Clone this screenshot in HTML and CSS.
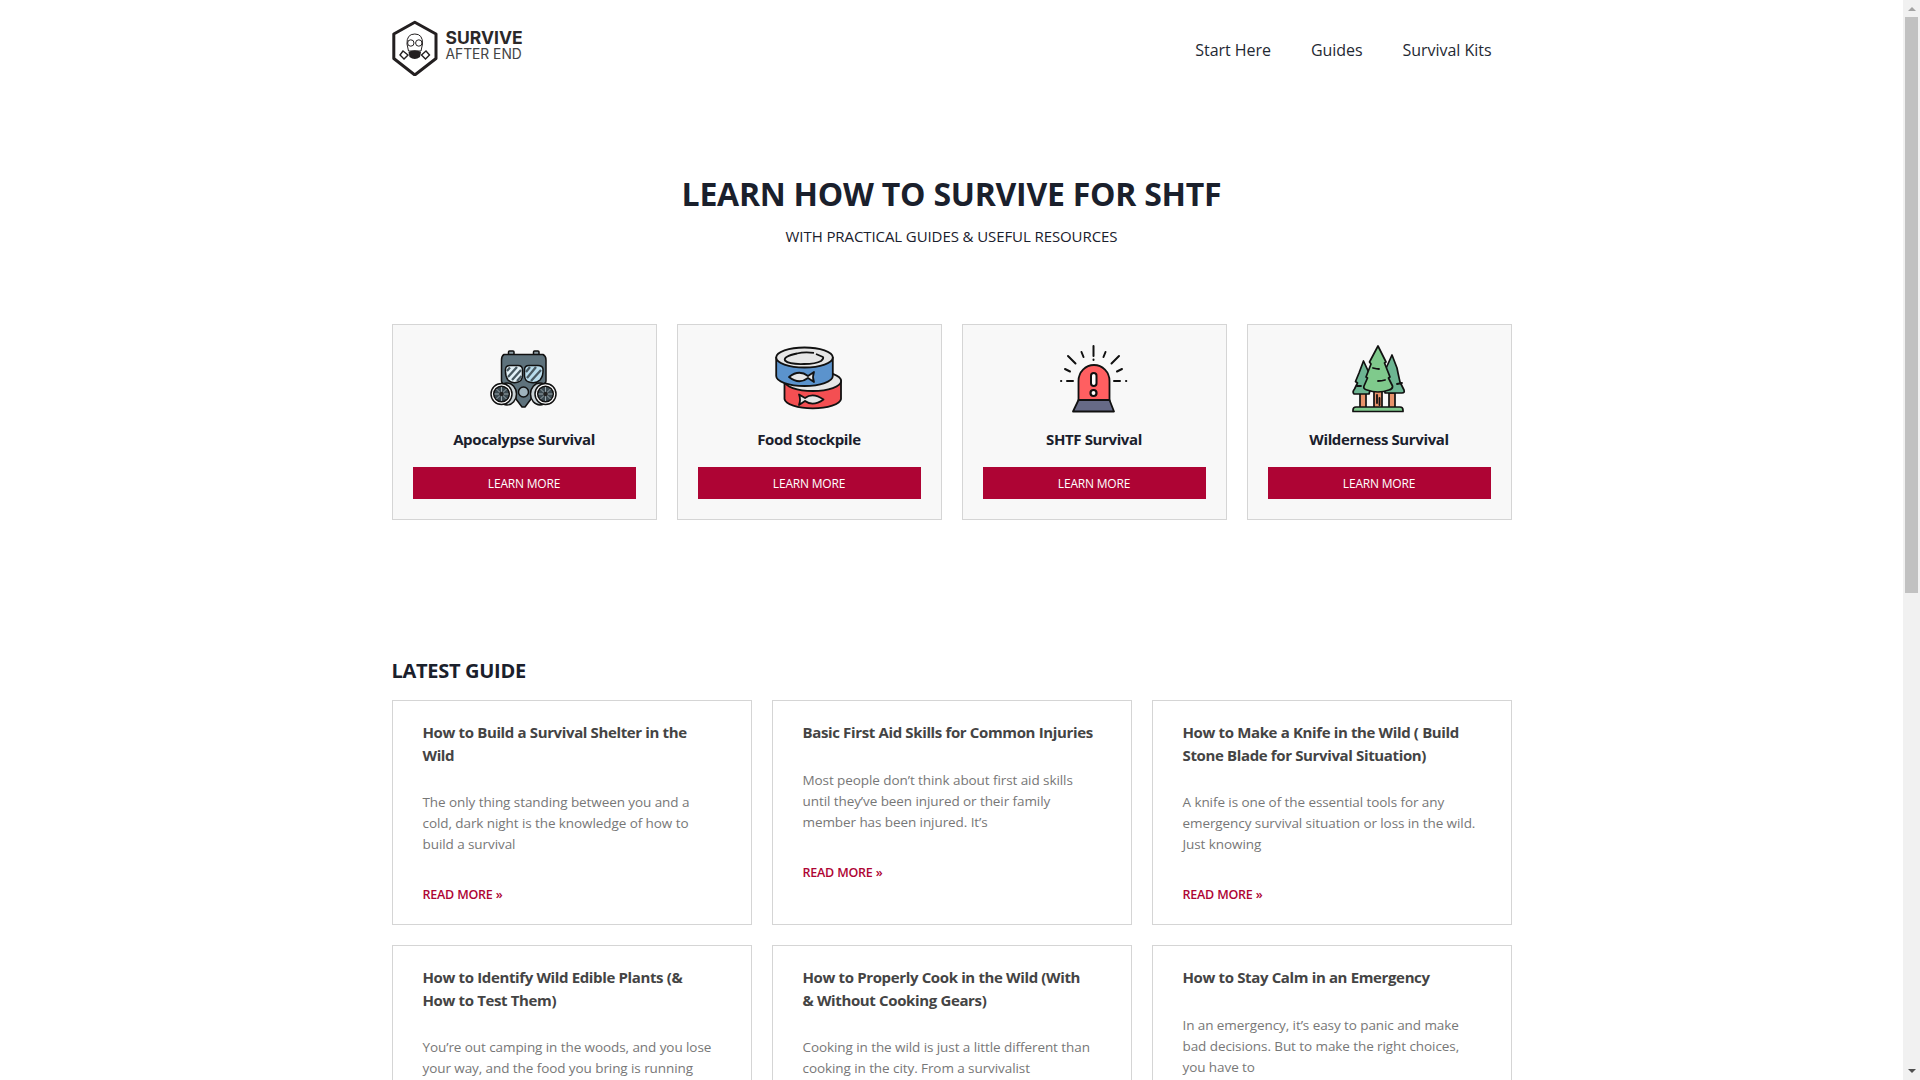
FILE: index.html
```html
<!DOCTYPE html>
<html lang="en">
<head>
<meta charset="utf-8">
<title>Survive After End</title>
<link rel="stylesheet" href="styles.css">
</head>
<body>
<div class="shell">
<div class="page">
  <header class="site-header">
    <a class="logo" href="#">
      <svg class="logo-mark" viewBox="0 0 46 56" width="46" height="56" aria-hidden="true">
        <path d="M22.800 2.200 L44 14 V38.500 L22.800 55 L1.800 38.500 V14 Z" fill="#fff" stroke="#231f20" stroke-width="3" stroke-linejoin="round"/>
        <g fill="none" stroke="#231f20" stroke-width="1">
          <path d="M15 24 Q14.500 14 22.800 14 Q31 14 30.500 24 L29 31 H16.500 Z"/>
          <circle cx="18.800" cy="23" r="3.200"/><circle cx="26.800" cy="23" r="3.200"/>
          <path d="M11 31 L8 35 L12 39 L16 35 Z M34 31 L37.500 35 L33.500 39 L29.500 35 Z" stroke-width="1.400"/>
        </g>
        <path d="M16.500 32 Q22.800 28.500 29 32 L28 37 Q22.800 41 17.500 37 Z" fill="#231f20"/>
      </svg>
      <span class="logo-text"><strong>SURVIVE</strong><span>AFTER END</span></span>
    </a>
    <nav class="nav">
      <a href="#">Start Here</a>
      <a href="#">Guides</a>
      <a href="#">Survival Kits</a>
    </nav>
  </header>

  <section class="hero">
    <h1>LEARN HOW TO SURVIVE FOR SHTF</h1>
    <p>WITH PRACTICAL GUIDES &amp; USEFUL RESOURCES</p>
  </section>

  <section class="topics">
    <article class="topic">
      <svg class="topic-icon" viewBox="0 0 68 68" aria-hidden="true">
        <g stroke="#111" stroke-width="1.500" stroke-linejoin="round">
          <rect x="18.500" y="6" width="5.500" height="8" rx="1" fill="#8b9ba3"/>
          <rect x="43.500" y="6" width="5.500" height="8" rx="1" fill="#8b9ba3"/>
          <path d="M14 9.500 H53 Q56 11 56 15 V36 Q56 39 50 40 L42 44 L41 54 L35 62 H32 L26 54 L25 44 L17 40 Q11.500 39 11.500 36 V15 Q11.500 11 14 9.500Z" fill="#5e727c"/>
          <path d="M15.500 24 Q16 20.500 20 20.500 H28 Q32.500 20.500 32.500 25 V31 Q32 36 28 37 Q22 39 18 35 Q15 31 15.500 24 Z" fill="#e3f1f7"/>
          <path d="M34.500 25 Q34.500 20.500 39 20.500 H48 Q52.500 20.500 53 24 Q53.500 31 50 35 Q46 39 39 37 Q35 36 34.500 31 Z" fill="#b9dcec"/>
        </g>
        <g stroke="#4a5a62" stroke-width="2.300" fill="none">
          <path d="M18 32 L27 22 M22 35 L31 25 M27 36 L31.500 31 M17 26 L20 22.500 M37 33 L46 22 M41 36 L51 25 M36 27 L40 22"/>
        </g>
        <g stroke="#111" stroke-width="1.500">
          <circle cx="33.500" cy="47" r="5" fill="#9fb3bd"/>
          <ellipse cx="17" cy="49" rx="9.500" ry="11" fill="#c9d2d6"/>
          <ellipse cx="50" cy="49" rx="9.500" ry="11" fill="#c9d2d6"/>
          <circle cx="11.500" cy="49" r="10.500" fill="#fff"/>
          <circle cx="55.500" cy="49" r="10.500" fill="#fff"/>
          <circle cx="11.500" cy="49" r="7.800" fill="#3c4a51"/>
          <circle cx="55.500" cy="49" r="7.800" fill="#3c4a51"/>
        </g>
        <g stroke="#9aa7ad" stroke-width="1">
          <path d="M11.500 42 V56 M4.500 49 H18.500 M6.500 44 L16.500 54 M16.500 44 L6.500 54 M55.500 42 V56 M48.500 49 H62.500 M50.500 44 L60.500 54 M60.500 44 L50.500 54"/>
        </g>
        <circle cx="11.500" cy="49" r="2.300" fill="#222"/><circle cx="55.500" cy="49" r="2.300" fill="#222"/>
      </svg>
      <h2>Apocalypse Survival</h2>
      <a class="btn" href="#">LEARN MORE</a>
    </article>
    <article class="topic">
      <svg class="topic-icon" viewBox="0 0 68 68" aria-hidden="true">
        <g stroke="#111" stroke-width="1.800" stroke-linejoin="round">
          <path d="M9.500 36 V54 A28.300 10 0 0 0 66 54 V36 Z" fill="#f44f52"/>
          <ellipse cx="37.800" cy="36" rx="28.300" ry="10" fill="#e6e6e6"/>
          <path d="M1.200 12.500 V31 A28.300 10 0 0 0 57.800 31 V12.500 Z" fill="#5b93cd"/>
          <ellipse cx="29.500" cy="12.500" rx="28.300" ry="10" fill="#e6e6e6"/>
          <path d="M14 32 Q24 24 33 31 L39 27 Q37 32 39 37 L33 33 Q24 40 14 32Z" fill="#e6e6e6"/>
          <path d="M48.500 54.500 Q38 47 30 53 L24 49.500 Q26 54.500 24 60 L30 56 Q38 62 48.500 54.500Z" fill="#e6e6e6"/>
          <path d="M39 7.800 Q29 6.500 22 8.500 Q8 11.500 10 15.500 Q14 19.500 29 19 Q41 19 46 16 Q49 13.500 48 12 L41 9" fill="none"/>
        </g>
      </svg>
      <h2>Food Stockpile</h2>
      <a class="btn" href="#">LEARN MORE</a>
    </article>
    <article class="topic">
      <svg class="topic-icon" viewBox="0 0 68 68" aria-hidden="true">
        <path d="M18.500 55 V36 A15.500 16 0 0 1 49.500 36 V55 Z" fill="#ff5f61" stroke="#111" stroke-width="1.800"/>
        <path d="M18.500 55 H49.500 L54 66.500 H13 Z" fill="#666a86" stroke="#111" stroke-width="1.800" stroke-linejoin="round"/>
        <rect x="31" y="28" width="5.500" height="13" rx="2.750" fill="#fff" stroke="#111" stroke-width="2"/>
        <circle cx="33.500" cy="48" r="3" fill="#fff" stroke="#111" stroke-width="2.200"/>
        <g stroke="#111" stroke-width="2" stroke-linecap="round" fill="none">
          <path d="M33.500 1 V11 M33.500 14.500 V15"/>
          <path d="M8 11 L15.500 18.500 M59 11 L51.500 18.500"/>
          <path d="M21.500 7 L23.500 12 M45.500 7 L43.500 12"/>
          <path d="M5 24 L10 26.500 M62 24 L57 26.500"/>
          <path d="M7 36 H13 M54 36 H60 M1 36 H1.300 M66 36 H66.300"/>
        </g>
      </svg>
      <h2>SHTF Survival</h2>
      <a class="btn" href="#">LEARN MORE</a>
    </article>
    <article class="topic">
      <svg class="topic-icon" viewBox="0 0 68 68" aria-hidden="true">
        <g stroke="#111" stroke-width="1.700" stroke-linejoin="round">
          <rect x="15" y="48" width="6" height="15" fill="#e8926a"/>
          <rect x="29" y="46" width="8" height="17" fill="#e8926a"/>
          <rect x="44" y="48" width="6" height="15" fill="#e8926a"/>
          <path d="M8 65 Q8 62 11 62 H55 Q58 62 58 65 V66.500 H8 Z" fill="#7fca8c"/>
          <path d="M18.500 16 L25 30 L26 42 L24 49 H9 Q7 47 9.500 44 L12.500 38 L10.500 36.500 L14 28 Z" fill="#6cb592"/>
          <path d="M47 10 L52 23 L53 28 L55 37 L59 45 Q60 48 57 48 H40 L38 30 Z" fill="#6cb592"/>
          <path d="M33 1 L41 17 L39.500 18 L45 32 L43.500 33 L47.500 41 Q48 44 44 45 Q33 49 22 45 Q18 44 19 41 L22.500 33 L21 32 L26 19 L24.500 17 Z" fill="#7fca8c"/>
        </g>
        <g stroke="#111" stroke-width="1.800" stroke-linecap="round" fill="none">
          <path d="M28 23 Q32 24 34 24 M33 36 Q37 36 40 35 M12 41 H16 M52 39 L57 38 M32 50 V58 M34.500 53 V60"/>
        </g>
      </svg>
      <h2>Wilderness Survival</h2>
      <a class="btn" href="#">LEARN MORE</a>
    </article>
  </section>

  <section class="latest">
    <h2 class="latest-title">LATEST GUIDE</h2>
    <div class="guides">
      <article class="guide">
        <h3>How to Build a Survival Shelter in the Wild</h3>
        <p>The only thing standing between you and a cold, dark night is the knowledge of how to build a survival</p>
        <a class="more" href="#">READ MORE »</a>
      </article>
      <article class="guide">
        <h3>Basic First Aid Skills for Common Injuries</h3>
        <p>Most people don’t think about first aid skills until they’ve been injured or their family member has been injured. It’s</p>
        <a class="more" href="#">READ MORE »</a>
      </article>
      <article class="guide">
        <h3>How to Make a Knife in the Wild ( Build Stone Blade for Survival Situation)</h3>
        <p>A knife is one of the essential tools for any emergency survival situation or loss in the wild. Just knowing</p>
        <a class="more" href="#">READ MORE »</a>
      </article>
      <article class="guide">
        <h3>How to Identify Wild Edible Plants (&amp; How to Test Them)</h3>
        <p>You’re out camping in the woods, and you lose your way, and the food you bring is running out</p>
        <a class="more" href="#">READ MORE »</a>
      </article>
      <article class="guide">
        <h3>How to Properly Cook in the Wild (With &amp;&nbsp;Without Cooking Gears)</h3>
        <p>Cooking in the wild is just a little different than cooking in the city. From a survivalist perspective</p>
        <a class="more" href="#">READ MORE »</a>
      </article>
      <article class="guide">
        <h3>How to Stay Calm in an Emergency</h3>
        <p>In an emergency, it’s easy to panic and make bad decisions. But to make the right choices, you have to</p>
        <a class="more" href="#">READ MORE »</a>
      </article>
    </div>
  </section>
</div>
<div class="scrollbar" aria-hidden="true">
  <span class="arrow-up"></span>
  <span class="thumb"></span>
  <span class="arrow-down"></span>
</div>
</div>
</body>
</html>
```
FILE: styles.css
```css
* { box-sizing: border-box; }
html, body { margin: 0; height: 100%; overflow: hidden; background: #fff; }
body { font-family: "Open Sans", "Noto Sans", "Liberation Sans", sans-serif; color: #1a202c; }
a { text-decoration: none; color: inherit; }
h1, h2, h3, p { margin: 0; }

.shell { display: flex; height: 100vh; overflow: hidden; }
.page { flex: 1; min-width: 0; height: 100vh; overflow: hidden; }

.scrollbar { width: 17px; flex: none; background: #f1f1f1; display: flex; flex-direction: column; align-items: center; }
.arrow-up, .arrow-down { width: 0; height: 0; border-left: 4px solid transparent; border-right: 4px solid transparent; flex: none; }
.arrow-up { border-bottom: 4px solid #a3a3a3; margin: 7px 0 6px; }
.thumb { width: 13px; height: 576px; background: #c1c1c1; flex: none; }
.arrow-down { border-top: 4px solid #505050; margin-top: auto; margin-bottom: 7px; }

.site-header { width: 1120px; margin: 0 auto; padding-top: 20px; height: 96px; display: flex; justify-content: space-between; align-items: flex-start; }
.logo { display: flex; align-items: center; gap: 8px; color: #231f20; }
.logo-mark { display: block; flex: none; }
.logo-text { display: flex; flex-direction: column; padding-bottom: 5px; font-family: Inter, "Open Sans", sans-serif; }
.logo-text strong { font-size: 17.500px; line-height: 17px; font-weight: 700; color: #2b2829; }
.logo-text span { font-size: 13.800px; line-height: 16px; color: #444; }
.nav { display: flex; gap: 40px; padding: 18px 20px 0 0; font-size: 16px; line-height: 24px; letter-spacing: -0.04px; color: #1f2933; }

.hero { text-align: center; padding-top: 78px; height: 228px; }
.hero h1 { font-size: 32px; line-height: 40px; font-weight: 700; letter-spacing: -0.25px; color: #1a202c; }
.hero p { font-size: 15px; line-height: 24px; letter-spacing: -0.09px; margin-top: 10px; color: #1a202c; }

.topics { width: 1120px; margin: 0 auto; display: grid; grid-template-columns: repeat(4, 265px); gap: 20px; }
.topic { height: 196px; background: #f8f8f8; border: 1px solid #d5d5d5; padding: 20px; display: flex; flex-direction: column; align-items: center; }
.topic-icon { width: 68px; height: 68px; display: block; flex: none; }
.topic h2 { font-size: 15px; line-height: 22px; font-weight: 700; letter-spacing: -0.38px; margin-top: 15px; color: #1a202c; }
.btn { width: 223px; height: 32px; margin-top: 17px; display: flex; align-items: center; justify-content: center; background: #ae0434; color: #fff; font-size: 12px; letter-spacing: -0.2px; }

.latest { width: 1120px; margin: 0 auto; padding-top: 135px; }
.latest-title { font-size: 20px; line-height: 32px; font-weight: 700; letter-spacing: -0.3px; color: #1a202c; margin-bottom: 13px; }
.guides { display: grid; grid-template-columns: repeat(3, 360px); gap: 20px; }
.guide { height: 225px; border: 1px solid #d5d5d5; padding: 20px 30px 0; display: flex; flex-direction: column; align-items: flex-start; }
.guide h3 { max-width: 292px; font-size: 15px; line-height: 22.500px; font-weight: 700; letter-spacing: -0.36px; color: #444; }
.guide p { max-width: 294px; font-size: 13.500px; line-height: 21px; letter-spacing: -0.08px; color: #777; margin-top: 26px; }
.more { font-size: 12.500px; line-height: 20px; font-weight: 600; letter-spacing: -0.2px; color: #ae0434; margin-top: 30px; }
```
